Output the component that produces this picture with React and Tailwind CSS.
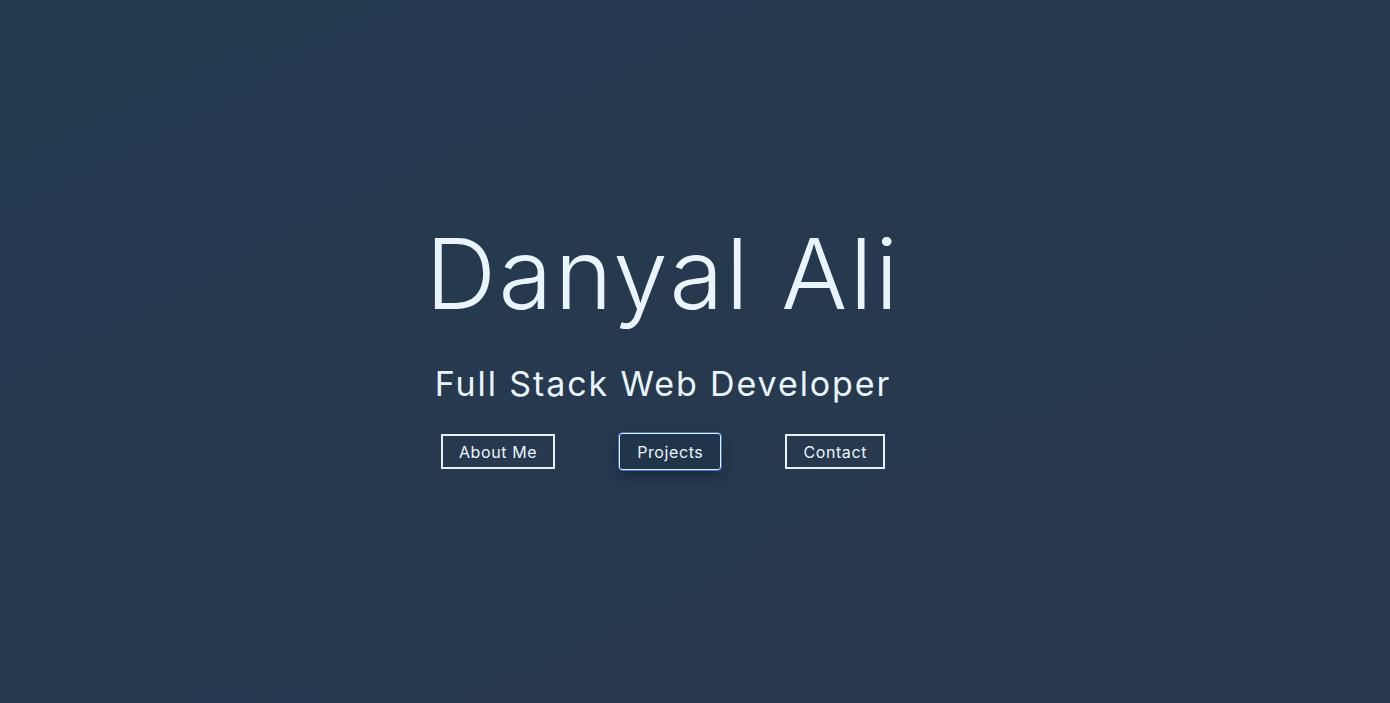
export default function App() {
  const font = { fontFamily: '"Inter", "Open Sans", sans-serif' };
  return (
    <div
      className="w-full h-[703px] flex flex-col items-center justify-center pr-[64px] pb-[8px] bg-gradient-to-br from-[#233a4f] to-[#29384f] text-[#eaf4fb]"
      style={font}
    >
      <h1 className="text-[98px] leading-none font-light tracking-[2.5px]">Danyal Ali</h1>
      <h2 className="text-[34px] leading-none font-normal tracking-[1.9px] mt-[44px]">Full Stack Web Developer</h2>
      <div className="flex items-center gap-16 mt-[32px]">
        <button className="h-[35px] px-[16px] border-2 border-[#e8f2fb] text-[16px] font-normal tracking-[0.6px] text-[#eaf4fb]">About Me</button>
        <button className="h-[37px] px-[17px] border border-[#e8f2fb] rounded-[3px] outline outline-1 outline-[#3a6fd8] text-[16px] font-normal tracking-[0.6px] text-[#eaf4fb] bg-[#20354a] shadow-[0_6px_14px_rgba(10,20,35,0.45)]">Projects</button>
        <button className="h-[35px] px-[16px] border-2 border-[#e8f2fb] text-[16px] font-normal tracking-[0.6px] text-[#eaf4fb]">Contact</button>
      </div>
    </div>
  );
}
